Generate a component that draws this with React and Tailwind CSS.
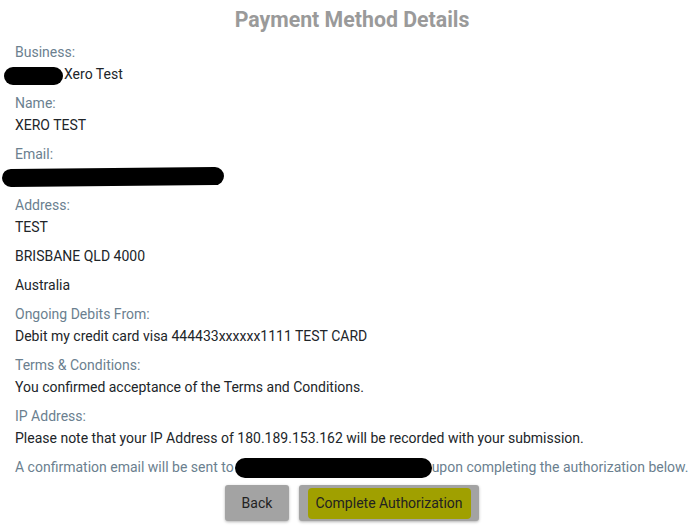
const FONT = { fontFamily: 'Roboto, "Liberation Sans", sans-serif' }

function Redact({ className }) {
  return <span className={`inline-block bg-black rounded-full align-middle ${className}`} />
}

function Field({ label, children }) {
  return (
    <div>
      <div className="text-[#6b7f8f] leading-[22px]">{label}</div>
      {children}
    </div>
  )
}

function Value({ children }) {
  return <p className="text-[#212529] leading-[22px] mb-[7px]">{children}</p>
}

export default function App() {
  return (
    <div className="bg-white w-[696px] h-[529px] overflow-hidden text-[14px]" style={FONT}>
      <div className="pl-[15px] pr-[7px]">
        <h1 className="text-center text-[21.3px] font-bold text-[#9a9a9a] leading-[24px] pt-[8px] pb-[9px]">
          Payment Method Details
        </h1>

        <Field label="Business:">
          <Value>
            <span className="relative">
              <Redact className="absolute -left-[11px] top-[1px] w-[59px] h-[18px]" />
            </span>
            <span className="pl-[49px]">Xero Test</span>
          </Value>
        </Field>

        <Field label="Name:">
          <Value>XERO TEST</Value>
        </Field>

        <Field label="Email:">
          <div className="h-[22px] mb-[7px] relative">
            <span className="absolute -left-[13px] top-[3px] w-[222px] h-[18px] bg-black rounded-full -rotate-[0.5deg]" />
          </div>
        </Field>

        <Field label="Address:">
          <Value>TEST</Value>
          <Value>BRISBANE QLD 4000</Value>
          <Value>Australia</Value>
        </Field>

        <Field label="Ongoing Debits From:">
          <Value>Debit my credit card visa 444433xxxxxx1111 TEST CARD</Value>
        </Field>

        <Field label="Terms &amp; Conditions:">
          <Value>You confirmed acceptance of the Terms and Conditions.</Value>
        </Field>

        <Field label="IP Address:">
          <Value>Please note that your IP Address of 180.189.153.162 will be recorded with your submission.</Value>
        </Field>

        <p className="text-[#6b7f8f] leading-[22px] mb-[7px] whitespace-nowrap">
          A confirmation email will be sent to
          <span className="inline-block w-[197px] h-[20px] bg-black rounded-full align-middle ml-[1px]" />
          upon completing the authorization below.
        </p>

        <div className="flex justify-center gap-[10px]">
          <button className="h-[36px] w-[64px] rounded-[3px] bg-[#a3a3a3] text-[#222] shadow-[0_1px_3px_rgba(0,0,0,0.3)]">
            Back
          </button>
          <button className="h-[36px] w-[180px] rounded-[3px] bg-[#a3a3a3] text-[#222] shadow-[0_1px_3px_rgba(0,0,0,0.3)] flex items-center justify-center">
            <span className="bg-[#a0a000] rounded-[4px] px-[8px] py-[5px]">Complete Authorization</span>
          </button>
        </div>
      </div>
    </div>
  )
}
